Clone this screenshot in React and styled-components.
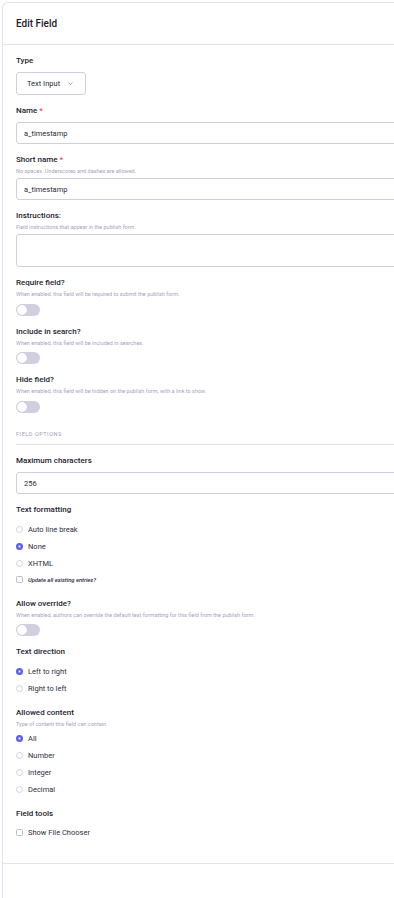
import React from 'react';
import styled, { createGlobalStyle } from 'styled-components';

const Global = createGlobalStyle`
  html, body { margin: 0; padding: 0; background: #ffffff; overflow: hidden; }
  body { font-family: Roboto, "Liberation Sans", sans-serif; color: #1c1b29; }
  * { box-sizing: border-box; }
`;

const Page = styled.div`
  padding: 2px 0 0 2px;
  height: 898px;
`;

const Panel = styled.section`
  width: 470px;
  height: 896px;
  display: flex;
  flex-direction: column;
  background: #fff;
  border: 1px solid #e3e1ef;
  border-right: none;
  border-bottom: none;
  border-top-left-radius: 6px;
`;

const Header = styled.header`
  height: 42px;
  flex: none;
  display: flex;
  align-items: center;
  padding: 0 13px;
  border-bottom: 1px solid #e3e1ef;
`;

const Title = styled.h1`
  margin: 0;
  font-size: 10px;
  font-weight: 500;
  color: #1c1b29;
`;

const Body = styled.div`
  flex: none;
  display: flex;
  flex-direction: column;
  gap: 11px;
  padding: 11px 13px 22px;
`;

const Field = styled.div`
  display: flex;
  flex-direction: column;
  align-items: flex-start;
`;

const Label = styled.div`
  font-size: 8px;
  line-height: 10px;
  font-weight: 500;
  color: #1d1c2c;
`;

const Req = styled.span`
  color: #e5484d;
  margin-left: 2px;
`;

const Hint = styled.div`
  margin-top: 2px;
  font-size: 5.5px;
  line-height: 8px;
  color: #a6a4bb;
`;

const Select = styled.div`
  margin-top: 6px;
  width: 70px;
  height: 23px;
  display: flex;
  align-items: center;
  gap: 8px;
  padding: 0 0 0 10px;
  border: 1px solid #cfcde0;
  border-radius: 3px;
  font-size: 7.5px;
  color: #2a2938;
  white-space: nowrap;
  & > span { flex: none; }
  & > svg { flex: none; }
`;

const TextInput = styled.input`
  margin-top: ${p => (p.$afterHint ? 3 : 6)}px;
  width: 100%;
  height: 22px;
  padding: 0 7px;
  border: 1px solid #cfcde0;
  border-radius: 3px;
  font-family: Roboto, "Liberation Sans", sans-serif;
  font-size: 7.5px;
  color: #2a2938;
  background: #fff;
  outline: none;
`;

const TextArea = styled.textarea`
  margin-top: 3px;
  width: 100%;
  height: 33px;
  padding: 5px 7px;
  border: 1px solid #cfcde0;
  border-radius: 3px;
  resize: none;
  font-family: Roboto, "Liberation Sans", sans-serif;
  font-size: 7.5px;
  background: #fff;
  outline: none;
`;

const Toggle = styled.div`
  margin-top: 5.5px;
  width: 24px;
  height: 12px;
  border-radius: 6px;
  background: #d0cfe0;
  padding: 1px;
  display: flex;
  align-items: center;
  &::after {
    content: '';
    width: 10px;
    height: 10px;
    border-radius: 50%;
    background: #ffffff;
    box-shadow: 0 0 1px rgba(0, 0, 0, 0.15);
  }
`;

const SectionTitle = styled.div`
  margin-top: 6.5px;
  padding-bottom: 6px;
  border-bottom: 1px solid #e3e1ef;
  font-size: 5.5px;
  line-height: 8px;
  letter-spacing: 0.55px;
  text-transform: uppercase;
  color: #9f9db4;
`;

const OptionList = styled.div`
  margin-top: ${p => (p.$afterHint ? 2 : 5.5)}px;
  display: flex;
  flex-direction: column;
`;

const Option = styled.div`
  height: ${p => (p.$short ? 16 : 17)}px;
  display: flex;
  align-items: center;
  gap: 5px;
  font-size: 7.5px;
  color: #2f2e3d;
`;

const Radio = styled.span`
  width: 7px;
  height: 7px;
  flex: none;
  border-radius: 50%;
  border: ${p => (p.$on ? '2px solid #5b5ee6' : '1px solid #d3d1e0')};
  background: #ffffff;
  box-shadow: ${p => (p.$on ? 'inset 0 0 0 0.6px #5b5ee6' : 'none')};
`;

const Check = styled.span`
  width: 7px;
  height: 7px;
  flex: none;
  border-radius: 1.5px;
  border: 1px solid #bdbbd0;
  background: #fff;
`;

const SmallText = styled.span`
  font-size: 5.8px;
  font-style: italic;
  font-weight: 500;
  color: #2a2938;
`;

const Footer = styled.footer`
  flex: 1;
  border-top: 1px solid #e3e1ef;
`;

const Chevron = () => (
  <svg width="5" height="3" viewBox="0 0 5 3" fill="none">
    <polyline points="0.5,0.5 2.5,2.5 4.5,0.5" stroke="#9c9ab0" strokeWidth="0.8" />
  </svg>
);

const Radios = ({ items, selected, afterHint }) => (
  <OptionList $afterHint={afterHint}>
    {items.map(it => (
      <Option key={it}>
        <Radio $on={it === selected} />
        {it}
      </Option>
    ))}
  </OptionList>
);

export default function App() {
  return (
    <Page>
      <Global />
      <Panel>
        <Header>
          <Title>Edit Field</Title>
        </Header>
        <Body>
          <Field>
            <Label>Type</Label>
            <Select>
              <span>Text Input</span>
              <Chevron />
            </Select>
          </Field>
          <Field>
            <Label>Name<Req>*</Req></Label>
            <TextInput readOnly value="a_timestamp" />
          </Field>
          <Field>
            <Label>Short name<Req>*</Req></Label>
            <Hint>No spaces. Underscores and dashes are allowed.</Hint>
            <TextInput $afterHint readOnly value="a_timestamp" />
          </Field>
          <Field>
            <Label>Instructions:</Label>
            <Hint>Field instructions that appear in the publish form.</Hint>
            <TextArea readOnly value="" />
          </Field>
          <Field>
            <Label>Require field?</Label>
            <Hint>When enabled, this field will be required to submit the publish form.</Hint>
            <Toggle />
          </Field>
          <Field>
            <Label>Include in search?</Label>
            <Hint>When enabled, this field will be included in searches.</Hint>
            <Toggle />
          </Field>
          <Field>
            <Label>Hide field?</Label>
            <Hint>When enabled, this field will be hidden on the publish form, with a link to show.</Hint>
            <Toggle />
          </Field>
          <SectionTitle>Field Options</SectionTitle>
          <Field>
            <Label>Maximum characters</Label>
            <TextInput readOnly value="256" />
          </Field>
          <Field>
            <Label>Text formatting</Label>
            <OptionList>
              <Option><Radio />Auto line break</Option>
              <Option><Radio $on />None</Option>
              <Option><Radio />XHTML</Option>
              <Option $short><Check /><SmallText>Update all existing entries?</SmallText></Option>
            </OptionList>
          </Field>
          <Field>
            <Label>Allow override?</Label>
            <Hint>When enabled, authors can override the default text formatting for this field from the publish form.</Hint>
            <Toggle />
          </Field>
          <Field>
            <Label>Text direction</Label>
            <Radios items={['Left to right', 'Right to left']} selected="Left to right" />
          </Field>
          <Field>
            <Label>Allowed content</Label>
            <Hint>Type of content this field can contain.</Hint>
            <Radios afterHint items={['All', 'Number', 'Integer', 'Decimal']} selected="All" />
          </Field>
          <Field>
            <Label>Field tools</Label>
            <OptionList>
              <Option><Check />Show File Chooser</Option>
            </OptionList>
          </Field>
        </Body>
        <Footer />
      </Panel>
    </Page>
  );
}
